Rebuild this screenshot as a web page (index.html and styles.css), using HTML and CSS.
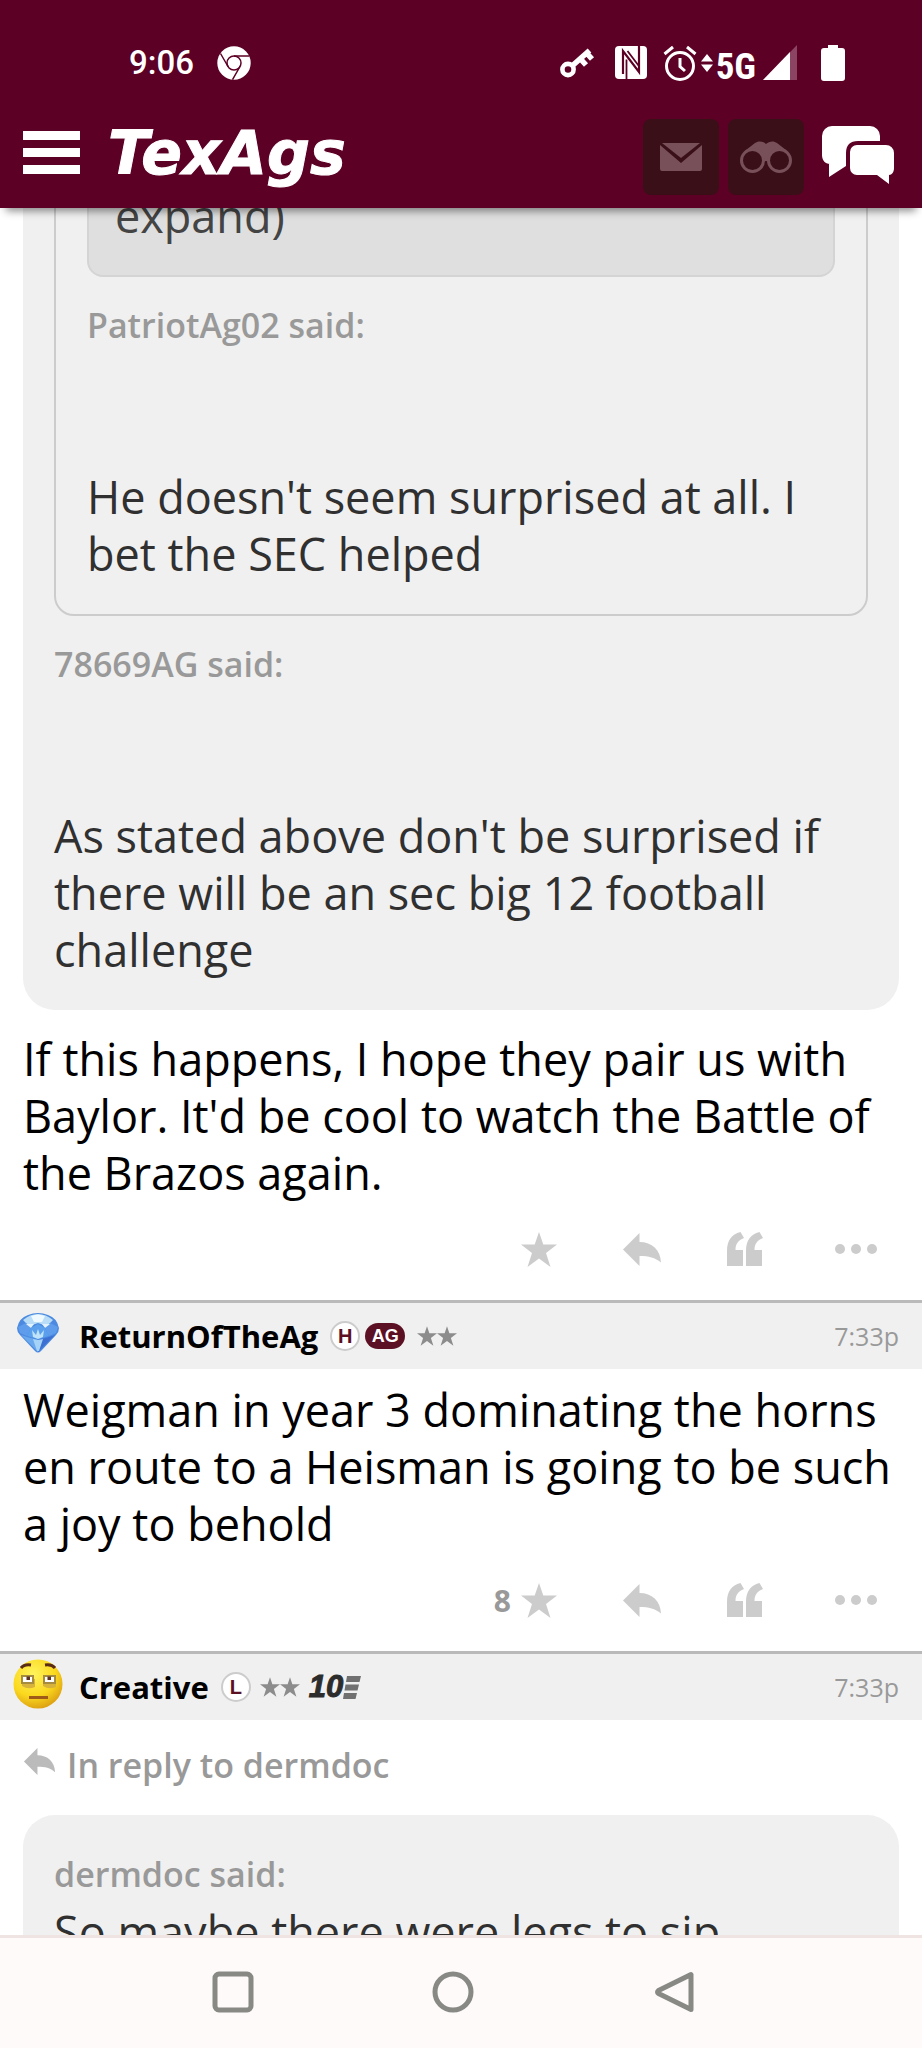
FILE: index.html
```html
<!DOCTYPE html>
<html lang="en">
<head>
<meta charset="utf-8">
<meta name="viewport" content="width=device-width, initial-scale=1">
<title>TexAgs</title>
<link rel="stylesheet" href="styles.css">
</head>
<body>
<svg class="defs" aria-hidden="true">
  <symbol id="star" viewBox="0 0 36 35"><path d="M18 0l4.300 12.500H36L25 21l4.500 14L18 26.500 6.500 35 11 21 0 12.500h13.700z"/></symbol>
  <symbol id="reply" viewBox="0 0 38 33"><path d="M0 16.500L16.500 0v9C29 9 37.500 17 38 29.500 32 24.500 26 23 16.500 23v10z"/></symbol>
  <symbol id="quote" viewBox="0 0 36 34"><path d="M0 34V19C0 8.500 4.500 2.500 13.500 0L17 6C11 8.500 8.500 12 8.500 18H16v16zM19 34V19C19 8.500 23.500 2.500 32.500 0L36 6c-6 2.500-8.500 6-8.500 12H35v16z"/></symbol>
  <symbol id="dots" viewBox="0 0 42 10"><circle cx="5" cy="5" r="5"/><circle cx="21" cy="5" r="5"/><circle cx="37" cy="5" r="5"/></symbol>
</svg>

<header class="top">
  <div class="status">
    <time class="clock">9:06</time>
    <svg class="i-chrome" viewBox="0 0 34 34"><circle cx="17" cy="17" r="16.700" fill="#fff"/><g fill="none" stroke="#5c0025" stroke-width="1.500"><circle cx="17" cy="17" r="7"/><path d="M17 10h15.500M11 20.500L3.500 7.500M23 20.500L15.500 33.700"/></g></svg>
    <span class="spacer"></span>
    <svg class="i-key" viewBox="0 0 35 32" fill="none" stroke="#fff"><circle cx="8" cy="22.500" r="5.600" stroke-width="4.600"/><path d="M12 19L29.500 3.500M20.500 12l5.500 6M27 6.500l5 5.500" stroke-width="5.500"/></svg>
    <svg class="i-nfc" viewBox="0 0 32 33"><rect width="32" height="33" rx="4" fill="#fff"/><path d="M8 28V5l16 21V0" fill="none" stroke="#5c0025" stroke-width="2.200"/><path d="M11.500 33V13.500M23.500 19.500L12.500 5" fill="none" stroke="#5c0025" stroke-width="1.800"/></svg>
    <svg class="i-alarm" viewBox="0 0 34 36" fill="none" stroke="#fff" stroke-width="3"><circle cx="17" cy="21" r="13.500"/><path d="M17 13v8.500l5 4.500M1.500 9l8.500-7M32.500 9L24 2"/></svg>
    <svg class="i-data" viewBox="0 0 12 18" fill="#fff"><path d="M6 0l6 7.500H0zM6 18l6-7.500H0z"/></svg>
    <span class="net">5G</span>
    <svg class="i-signal" viewBox="0 0 34 35"><path d="M34 0v35H0z" fill="#8b4562"/><path d="M27 7v28H0z" fill="#fff"/></svg>
    <svg class="i-battery" viewBox="0 0 24 36" fill="#fff"><path d="M7 0h10v3h4a3 3 0 0 1 3 3v27a3 3 0 0 1-3 3H3a3 3 0 0 1-3-3V6a3 3 0 0 1 3-3h4z"/></svg>
  </div>
  <div class="bar">
    <button class="menu" aria-label="Menu"><span></span><span></span><span></span></button>
    <a class="logo" href="#">TexAgs</a>
    <span class="spacer"></span>
    <button class="tile" aria-label="Messages"><svg width="42" height="28" viewBox="0 0 42 28" fill="#77505a"><path d="M2 0h38L21 15z"/><path d="M0 2l21 18L42 2v24a2 2 0 0 1-2 2H2a2 2 0 0 1-2-2z"/></svg></button>
    <button class="tile" aria-label="Watched topics"><svg width="52" height="32" viewBox="0 0 52 32"><path d="M6 9L15 2c3-2.500 8-2 11 1 3-3 8-3.500 11-1l9 7-14 12-6-1-6 1z" fill="#77505a"/><g fill="#3a0f17" stroke="#77505a" stroke-width="3"><circle cx="12.500" cy="19.500" r="11"/><circle cx="39.500" cy="19.500" r="11"/></g></svg></button>
    <button class="chat" aria-label="Forums"><svg width="72" height="58" viewBox="0 0 72 58" fill="#fff"><path d="M10 0h38a10 10 0 0 1 10 10v5H36C28 15 24 19 24 27v13L7 51V38H8C3 38 0 34 0 29V10A10 10 0 0 1 10 0z"/><path d="M35 19h29a8 8 0 0 1 8 8v15c0 4-2 7-5 7v9l-12-9H35a7 7 0 0 1-7-7V26a7 7 0 0 1 7-7z"/></svg></button>
  </div>
</header>

<main class="feed">
  <article class="post scrolled">
    <blockquote class="quote">
      <blockquote class="nested">
        <div class="collapsed">expand)</div>
        <cite>PatriotAg02 said:</cite>
        <p><br><br>He doesn't seem surprised at all. I bet the SEC helped</p>
      </blockquote>
      <cite>78669AG said:</cite>
      <p><br><br>As stated above don't be surprised if there will be an sec big 12 football challenge</p>
    </blockquote>
    <p class="text">If this happens, I hope they pair us with Baylor. It'd be cool to watch the Battle of the Brazos again.</p>
    <div class="actions">
      <button aria-label="Star"><svg class="a-star"><use href="#star"/></svg></button>
      <button aria-label="Reply"><svg class="a-reply"><use href="#reply"/></svg></button>
      <button aria-label="Quote"><svg class="a-quote"><use href="#quote"/></svg></button>
      <button class="more" aria-label="More"><svg class="a-dots"><use href="#dots"/></svg></button>
    </div>
  </article>

  <article class="post">
    <header class="head">
      <span class="avatar"><svg width="42" height="40" viewBox="0 0 42 40">
        <path d="M0 15Q2 5 11 2q10-4 20 0 9 3 11 13 0 4-3 7L24 38q-3 3-6 0L3 22q-3-3-3-7z" fill="#4b8ae0"/>
        <path d="M6 7Q13 1 21 1t15 6l-6 6-9-3-9 3z" fill="#b9ddf7"/><path d="M14 3q7-3 14 0l-3 6h-8z" fill="#eefaff"/>
        <path d="M1 14l8-4 5 5-4 8-7-3zM41 14l-8-4-5 5 4 8 7-3z" fill="#5f9cec"/>
        <path d="M9 11l5 4 3-4zM33 11l-5 4-3-4z" fill="#e2f3fd"/>
        <path d="M14 15l7-4 7 4 4 8-11 3-11-3z" fill="#5aa0ec"/><path d="M15 17l4 5 2-6 2 6 4-5-1 7-5 2-5-2z" fill="#bfe3fb"/>
        <path d="M10 24l11 3v12L4 22z" fill="#6aa8ee"/><path d="M32 24l-11 3v12l17-17z" fill="#3d70d2"/><path d="M16 26l5 1 5-1-4 12h-2z" fill="#a5d3f7"/>
      </svg></span>
      <a class="name" href="#">ReturnOfTheAg</a>
      <span class="badge">H</span><span class="pill">AG</span>
      <span class="stars"><svg><use href="#star"/></svg><svg><use href="#star"/></svg></span>
      <span class="spacer"></span><time>7:33p</time>
    </header>
    <p class="text">Weigman in year 3 dominating the horns en route to a Heisman is going to be such a joy to behold</p>
    <div class="actions">
      <button aria-label="Star, 8 so far"><span>8</span><svg class="a-star"><use href="#star"/></svg></button>
      <button aria-label="Reply"><svg class="a-reply"><use href="#reply"/></svg></button>
      <button aria-label="Quote"><svg class="a-quote"><use href="#quote"/></svg></button>
      <button class="more" aria-label="More"><svg class="a-dots"><use href="#dots"/></svg></button>
    </div>
  </article>

  <article class="post">
    <header class="head">
      <span class="avatar"><svg width="50" height="50" viewBox="0 0 50 50">
        <defs><radialGradient id="skin" cx=".4" cy=".3" r=".75"><stop offset="0" stop-color="#fff45c"/><stop offset=".6" stop-color="#fbd81e"/><stop offset="1" stop-color="#d99a10"/></radialGradient></defs>
        <circle cx="25" cy="25" r="24.500" fill="url(#skin)"/>
        <path d="M9 20h13v8q-7 3-13-1zM30 20h13v8q-7 3-13-1z" fill="#d8b33c"/>
        <path d="M9 17h11v7H9zM31 17h11v7H31z" fill="#fff" stroke="#a58c40" stroke-width="2"/>
        <path d="M13.500 17.500h3.500v3.500h-3.500zM34.500 17.500h3.500v3.500h-3.500z" fill="#5a3020"/>
        <path d="M8 9q3-4 10-3M32 6q7-1 10 3" fill="none" stroke="#5a2c14" stroke-width="3"/>
        <path d="M16 38.500h19" stroke="#a05a18" stroke-width="3"/>
      </svg></span>
      <a class="name" href="#">Creative</a>
      <span class="badge">L</span>
      <span class="stars tight"><svg><use href="#star"/></svg><svg><use href="#star"/></svg></span>
      <span class="years">10<svg width="18" height="23" viewBox="0 0 18 23" fill="#707070"><path d="M4 0h14l-1.500 6H3zM2.500 8.500H16l-1.500 6H1.500zM1 17h13l-1.500 6H0z"/></svg></span>
      <span class="spacer"></span><time>7:33p</time>
    </header>
    <a class="inreply" href="#"><svg><use href="#reply"/></svg>In reply to dermdoc</a>
    <blockquote class="quote open">
      <cite>dermdoc said:</cite>
      <p>So maybe there were legs to sip</p>
    </blockquote>
  </article>
</main>

<nav class="keys">
  <button aria-label="Recent apps"><svg viewBox="0 0 42 42"><rect x="3" y="3" width="36" height="36" rx="4"/></svg></button>
  <button aria-label="Home"><svg viewBox="0 0 42 42"><circle cx="21" cy="21" r="18"/></svg></button>
  <button aria-label="Back"><svg viewBox="0 0 42 42"><path d="M39 3.500v35L6.500 22.500q-2-1.500 0-3z"/></svg></button>
</nav>
</body>
</html>
```

FILE: styles.css
```css
* { box-sizing: border-box; }
body {
  margin: 0;
  height: 100vh;
  display: flex;
  flex-direction: column;
  overflow: hidden;
  background: #fff;
  color: #000;
  font: 45px/57px "Open Sans", "Noto Sans", sans-serif;
}
p, blockquote { margin: 0; }
a { color: inherit; text-decoration: none; }
button {
  margin: 0;
  padding: 0;
  border: 0;
  background: none;
  color: inherit;
  font: inherit;
}
svg { display: block; flex: none; }
.defs { position: absolute; width: 0; height: 0; }
.spacer { flex: 1; }

/* Phone status line and site bar */
.top {
  position: relative;
  z-index: 1;
  flex: none;
  background: #5c0025;
  color: #fff;
  box-shadow: 0 9px 8px -6px rgba(0, 0, 0, .45);
}
.status {
  display: flex;
  align-items: center;
  height: 105px;
  padding: 20px 77px 0 129px;
}
.clock { margin-right: 23px; font: 500 33px/40px Roboto, sans-serif; }
.i-chrome { width: 34px; height: 34px; }
.i-key { width: 35px; height: 32px; margin-right: 20px; }
.i-nfc { width: 32px; height: 33px; margin-right: 16px; }
.i-alarm { width: 34px; height: 36px; margin-right: 4px; }
.i-data { width: 12px; height: 18px; margin-right: 3px; }
.net {
  padding-top: 8px;
  margin-right: 7px;
  font: 700 37px/40px "Liberation Sans Narrow", "Roboto Condensed", Roboto, sans-serif;
}
.i-signal { width: 34px; height: 35px; margin-right: 24px; }
.i-battery { width: 24px; height: 36px; }

.bar {
  display: flex;
  align-items: center;
  height: 103px;
  padding: 0 28px 0 23px;
}
.menu {
  display: grid;
  gap: 8px;
  width: 57px;
  margin-right: 28px;
  padding-bottom: 9px;
}
.menu span { height: 9px; background: #fff; }
.logo {
  padding-bottom: 7px;
  font: italic 700 60px/64px "DejaVu Sans", sans-serif;
  -webkit-text-stroke: 1px #fff;
}
.tile {
  display: grid;
  place-items: center;
  width: 76px;
  height: 76px;
  margin-right: 9px;
  border-radius: 8px;
  background: #3a0f17;
}
.chat { margin-left: 9px; padding-bottom: 4px; }

/* Posts */
.feed { flex: 1; min-height: 0; overflow: hidden; }
.scrolled { margin-top: -87px; }
.quote {
  margin: 0 23px 20px;
  padding: 31px 31px 32px;
  border-radius: 32px;
  background: #f0f0f0;
  color: #303030;
}
.nested {
  margin-bottom: 20px;
  padding: 0 31px 32px;
  border: 2px solid #ccc;
  border-radius: 20px;
}
.collapsed {
  margin-bottom: 20px;
  padding: 31px 26px;
  border: 2px solid #d4d4d4;
  border-radius: 16px;
  background: #dfdfdf;
  color: #444;
}
cite {
  display: block;
  color: #999;
  font-size: 34px;
  font-style: normal;
  font-weight: 600;
}
.text { padding: 0 23px; }
.head + .text { padding-top: 12px; }

.actions {
  display: flex;
  align-items: center;
  justify-content: flex-end;
  gap: 66px;
  height: 99px;
  padding: 0 45px 3px 0;
  fill: #ccc;
}
.actions button {
  display: flex;
  align-items: center;
  gap: 10px;
  color: #999;
  font-size: 30px;
  font-weight: 700;
}
.actions .more { padding-left: 6px; }
.a-star { width: 36px; height: 35px; }
.a-reply { width: 38px; height: 33px; }
.a-quote { width: 36px; height: 34px; }
.a-dots { width: 42px; height: 10px; }

.head {
  display: flex;
  align-items: center;
  height: 69px;
  padding: 0 23px 0 13px;
  border-top: 3px solid #bababa;
  background: #f0f0f0;
}
.avatar {
  display: grid;
  place-items: center;
  width: 50px;
  height: 50px;
  margin: 0 16px 6px 0;
}
.name { margin-right: 12px; font-size: 31px; font-weight: 700; }
.badge, .pill {
  display: grid;
  place-items: center;
  height: 30px;
  font: 700 20px/26px "Liberation Sans", sans-serif;
}
.badge {
  width: 30px;
  margin-right: 5px;
  border: 2px solid #ccc;
  border-radius: 50%;
  background: #fff;
  color: #5c1023;
}
.pill {
  width: 40px;
  height: 26px;
  margin-right: 12px;
  border-radius: 13px;
  background: #5c1023;
  color: #fff;
  font-size: 18px;
}
.stars { display: flex; }
.stars svg { width: 20px; height: 20px; fill: #8c8c8c; }
.tight { margin: 0 9px 0 4px; }
.years {
  display: flex;
  align-items: center;
  color: #2c2c2c;
  font: italic 700 31px/32px "Liberation Sans", sans-serif;
  -webkit-text-stroke: 1px #2c2c2c;
}
.head time { color: #999; font-size: 25px; }

.inreply {
  display: flex;
  align-items: center;
  padding: 17px 23px 21px;
  color: #999;
  font-size: 34px;
  font-weight: 600;
}
.inreply svg { width: 33px; height: 27px; margin: 0 11px 8px 0; fill: #bbb; }

/* Phone navigation keys */
.keys {
  display: flex;
  justify-content: center;
  gap: 178px;
  flex: none;
  height: 113px;
  padding: 0 16px 2px 0;
  border-top: 3px solid #f0e4e2;
  background: #fdfaf9;
}
.keys svg {
  width: 42px;
  height: 42px;
  fill: none;
  stroke: #888885;
  stroke-width: 5px;
  stroke-linejoin: round;
}
```
